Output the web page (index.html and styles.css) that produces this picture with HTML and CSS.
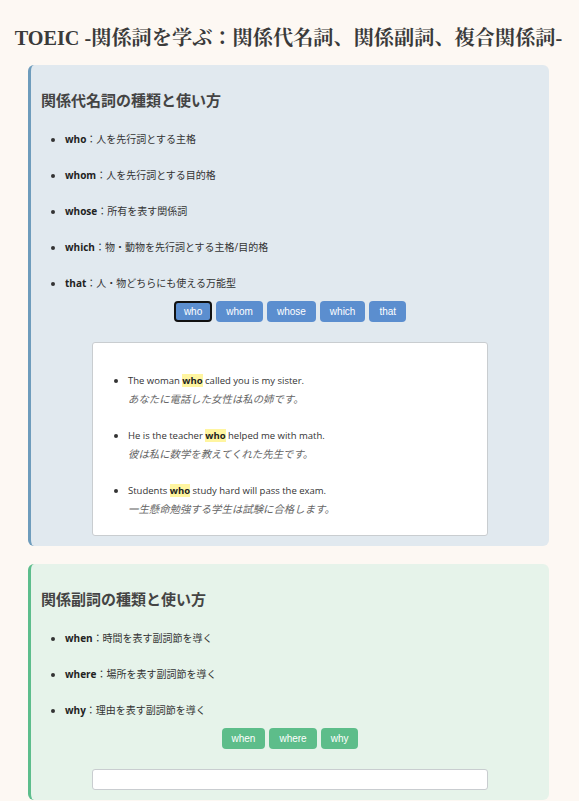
FILE: index.html
```html
<!DOCTYPE html>
<html lang="ja">
<head>
<meta charset="utf-8">
<title>TOEIC 関係詞</title>
<link rel="stylesheet" href="styles.css">
</head>
<body>
<h1 class="title">TOEIC -関係詞を学ぶ：関係代名詞、関係副詞、複合関係詞-</h1>

<section class="card card-blue">
  <h2 class="card-title">関係代名詞の種類と使い方</h2>
  <ul class="terms">
    <li><b>who</b>：人を先行詞とする主格</li>
    <li><b>whom</b>：人を先行詞とする目的格</li>
    <li><b>whose</b>：所有を表す関係詞</li>
    <li><b>which</b>：物・動物を先行詞とする主格/目的格</li>
    <li><b>that</b>：人・物どちらにも使える万能型</li>
  </ul>
  <div class="btns">
    <button class="btn btn-blue active">who</button>
    <button class="btn btn-blue">whom</button>
    <button class="btn btn-blue">whose</button>
    <button class="btn btn-blue">which</button>
    <button class="btn btn-blue">that</button>
  </div>
  <div class="examples">
    <ul class="ex-list">
      <li>
        <div class="en">The woman <mark>who</mark> called you is my sister.</div>
        <div class="ja">あなたに電話した女性は私の姉です。</div>
      </li>
      <li>
        <div class="en">He is the teacher <mark>who</mark> helped me with math.</div>
        <div class="ja">彼は私に数学を教えてくれた先生です。</div>
      </li>
      <li>
        <div class="en">Students <mark>who</mark> study hard will pass the exam.</div>
        <div class="ja">一生懸命勉強する学生は試験に合格します。</div>
      </li>
    </ul>
  </div>
</section>

<section class="card card-green">
  <h2 class="card-title">関係副詞の種類と使い方</h2>
  <ul class="terms">
    <li><b>when</b>：時間を表す副詞節を導く</li>
    <li><b>where</b>：場所を表す副詞節を導く</li>
    <li><b>why</b>：理由を表す副詞節を導く</li>
  </ul>
  <div class="btns">
    <button class="btn btn-green">when</button>
    <button class="btn btn-green">where</button>
    <button class="btn btn-green">why</button>
  </div>
  <div class="examples empty"></div>
</section>
</body>
</html>
```

FILE: styles.css
```css
html, body {
  background: #fdf8f3;
}
body {
  margin: 0;
  padding: 0 30px 20px 28px;
  font-family: "Open Sans", "Noto Sans CJK JP", sans-serif;
  color: #333;
}
.title {
  font-family: "Liberation Serif", "Noto Serif CJK JP", "Noto Sans CJK JP", serif;
  font-size: 20.2px;
  line-height: 28px;
  font-weight: bold;
  color: #3a3a3a;
  text-align: center;
  margin: 24px -20px 13px;
  white-space: nowrap;
}
.card {
  border-radius: 6px;
  padding: 15px 10px 10px 10px;
  margin-bottom: 18px;
}
.card-blue {
  background: #e1e9ef;
  border-left: 3px solid #6e9cbc;
}
.card-green {
  background: #e6f3ea;
  border-left: 3px solid #5dbd8c;
}
.card-title {
  font-size: 15px;
  line-height: 20px;
  font-weight: bold;
  color: #444;
  margin: 10px 0 0;
}
.terms {
  margin: 21px 0 10px;
  padding-left: 24px;
  font-size: 10px;
  line-height: 16px;
}
.terms li + li {
  margin-top: 20px;
}
.terms b {
  color: #222;
}
.btns {
  display: flex;
  justify-content: center;
  gap: 4px;
}
.btn {
  font-family: "Liberation Sans", Arial, sans-serif;
  font-size: 10px;
  line-height: 11px;
  color: #fff;
  border: 2px solid transparent;
  border-radius: 4px;
  padding: 3px 8px;
  cursor: pointer;
}
.btn-blue {
  background: #5b8ecf;
}
.btn-green {
  background: #5dbd8a;
}
.btn.active {
  border-color: #111;
}
.examples {
  width: 396px;
  box-sizing: border-box;
  margin: 20px auto 0;
  background: #fff;
  border: 1px solid #c9cdd0;
  border-radius: 3px;
  padding: 28px 15px 17px;
}
.examples.empty {
  height: 21px;
  padding: 0;
}
.ex-list {
  margin: 0;
  padding-left: 20px;
  font-size: 10px;
  line-height: 18px;
}
.ex-list li + li {
  margin-top: 18px;
}
.en {
  color: #333;
  font-size: 9.5px;
  line-height: 18px;
  height: 18px;
}
.ja {
  font-style: italic;
  font-size: 10.4px;
  line-height: 18px;
  height: 18px;
  color: #666;
}
mark {
  background: #fff5a0;
  color: #222;
  font-weight: bold;
}
```
